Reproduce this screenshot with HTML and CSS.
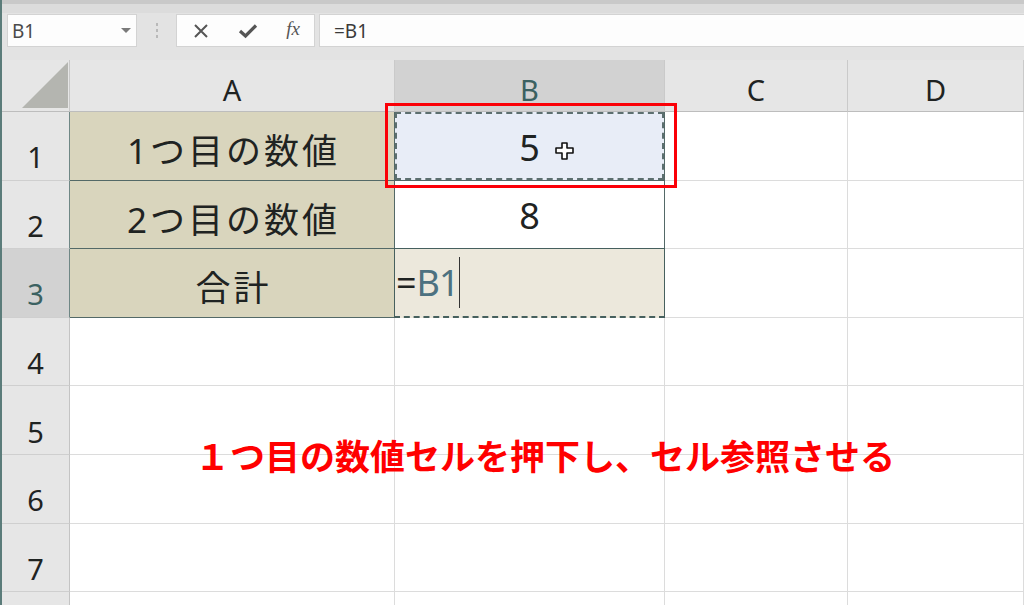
FILE: index.html
```html
<!DOCTYPE html>
<html lang="ja">
<head>
    <meta charset="UTF-8">
    <title>セル参照</title>
    <link rel="stylesheet" href="styles.css">
</head>
<body>
<div class="app">

    <!-- 数式バー -->
    <div class="topbar">
        <div class="namebox">
            <span>B1</span>
            <svg class="drop" width="10" height="5" viewBox="0 0 10 5"><path d="M0 0 H10 L5 5 Z" fill="#7a7a7a"/></svg>
        </div>
        <div class="dots"><i></i><i></i><i></i></div>
        <div class="fnbox">
            <svg width="16" height="16" viewBox="0 0 16 16"><path d="M2 2 L14 14 M14 2 L2 14" stroke="#555" stroke-width="2"/></svg>
            <svg width="20" height="16" viewBox="0 0 20 16"><path d="M2 8 L7.5 13 L18 2.5" stroke="#555" stroke-width="3.2" fill="none"/></svg>
            <span class="fx">fx</span>
        </div>
        <div class="formula">=B1</div>
    </div>

    <!-- シート -->
    <div class="sheet">
        <div class="corner"><svg width="46" height="46" viewBox="0 0 46 46"><path d="M46 0 V46 H0 Z" fill="#b4b5b0"/></svg></div>
        <div class="colhd">A</div>
        <div class="colhd sel">B</div>
        <div class="colhd">C</div>
        <div class="colhd">D</div>

        <div class="rowhd dk">1</div>
        <div class="cell label t">1つ目の数値</div>
        <div class="cell num copy">5
            <svg class="plus" width="22" height="20" viewBox="0 0 22 20"><path d="M8 2 H13 V7 H19 V12 H13 V18 H8 V12 H2 V7 H8 Z" fill="#fff" stroke="#111" stroke-width="1.6" stroke-linejoin="round"/></svg>
            <div class="redbox"></div>
        </div>
        <div class="cell"></div>
        <div class="cell"></div>

        <div class="rowhd dk">2</div>
        <div class="cell label t">2つ目の数値</div>
        <div class="cell num t">8</div>
        <div class="cell"></div>
        <div class="cell"></div>

        <div class="rowhd dk sel">3</div>
        <div class="cell label t">合計</div>
        <div class="cell edit"><span class="eq">=</span><span class="ref">B1</span><span class="caret"></span></div>
        <div class="cell"></div>
        <div class="cell"></div>

        <div class="rowhd">4</div>
        <div class="cell"></div><div class="cell"></div><div class="cell"></div><div class="cell"></div>
        <div class="rowhd">5</div>
        <div class="cell"></div><div class="cell"></div><div class="cell"></div><div class="cell"></div>
        <div class="rowhd">6</div>
        <div class="cell"></div><div class="cell"></div><div class="cell"></div><div class="cell"></div>
        <div class="rowhd">7</div>
        <div class="cell"></div><div class="cell"></div><div class="cell"></div><div class="cell"></div>
        <!-- 8行目は上端だけ見えている -->
        <div class="rowhd"></div>
        <div class="cell"></div><div class="cell"></div><div class="cell"></div><div class="cell"></div>

        <div class="note">１つ目の数値セルを押下し、セル参照させる</div>
    </div>

</div>
</body>
</html>
```

FILE: styles.css
```css
*
{
    box-sizing: border-box;
}

body
{
    margin: 0; height: 605px; overflow: hidden;
    font-family: "Noto Sans", "Noto Sans CJK JP", sans-serif;
    background-color: #ffffff; color: #1f2322;
}

.app { border-left: 2px solid #5b7c7a; height: 605px; overflow: hidden; }

/* 数式バー */
.topbar
{
    height: 60px; display: flex; align-items: flex-start;
    background-color: #e3e3e3; border-top: 4px solid #c9c9c9;
    padding-top: 10px; padding-left: 5px;
    box-shadow: inset 0 9px 0 #dcdcdc;
}

.namebox, .fnbox, .formula
{
    height: 33px; background-color: #fdfdfd;
    border: 1px solid #d3d3d3; display: flex; align-items: center;
}

.namebox
{
    width: 130px; padding: 0 5px 0 4px; justify-content: space-between;
    font-size: 19px; color: #4a4a4a;
}

.dots
{
    width: 39px; height: 33px; display: flex; flex-direction: column;
    align-items: center; justify-content: center; gap: 3px;
}
.dots i { width: 2px; height: 3px; background-color: #b9b9b9; display: block; }

.fnbox
{
    width: 139px; padding: 0 14px 0 16px; justify-content: space-between;
}

.fx
{
    font-family: "Liberation Serif", serif; font-style: italic;
    font-size: 19px; color: #555; padding-bottom: 3px;
}

.formula
{
    flex: 1; margin-left: 4px; padding-left: 14px;
    font-size: 19px; color: #3a3a3a; border-right: none;
}

/* シート */
.sheet
{
    position: relative; display: grid;
    grid-template-columns: 68px 325px 270px 183px 1fr;
    grid-template-rows: 52px;
    grid-auto-rows: 68.6px;
}

.corner
{
    background-color: #e6e6e6; border-right: 1px solid #c8c8c8;
    border-bottom: 1px solid #bdbdbd;
    display: flex; align-items: flex-end; justify-content: flex-end;
    padding: 0 1px 3px 0;
}

.colhd
{
    background-color: #e6e6e6; border-right: 1px solid #cacaca;
    border-bottom: 1px solid #bdbdbd;
    display: flex; justify-content: center; align-items: center;
    font-size: 29px; padding-top: 7px; color: #1f2322;
}

.rowhd
{
    background-color: #e6e6e6; border-right: 1px solid #c4c4c4;
    border-bottom: 1px solid #cfcfcf;
    display: flex; justify-content: center; align-items: center;
    font-size: 29px; padding-top: 22px;
}

.sel { background-color: #d2d2d2; color: #3b6161; }
.rowhd.dk { border-right-color: #6f8785; }

.cell
{
    border-right: 1px solid #dcdcdc; border-bottom: 1px solid #dcdcdc;
    display: flex; justify-content: center; align-items: center;
}

.t { border-right-color: #536967; border-bottom-color: #536967; }

.label
{
    background-color: #d9d5bd; font-size: 35px; letter-spacing: 3px;
    padding-left: 3px; padding-top: 6px;
}

.num { font-size: 36px; padding-top: 3px; }

.copy
{
    position: relative; background-color: #e8edf7;
    border-right-color: #536967; border-bottom-color: #536967;
}

.copy::after
{
    content: ""; position: absolute; inset: 0;
    border: 2px dashed #5c6f6f;
}

.plus { position: absolute; left: 159px; top: 29px; }

.redbox
{
    position: absolute; left: -10px; right: -13px; top: -9px; bottom: -8px;
    border: 3px solid #fb0007;
}

.edit
{
    background-color: #ece8dc; justify-content: flex-start;
    font-size: 36px; padding-left: 1px;
    border: 1px solid #46605e; border-bottom: 2px dashed #46605e;
    margin-top: -1px; margin-left: -1px;
}

.eq { color: #1f2322; }
.ref { color: #4d7180; letter-spacing: -1px; }
.caret { width: 1px; height: 51px; background-color: #333; margin-left: 0; }

.note
{
    position: absolute; left: 193px; top: 377px;
    font-family: "Noto Sans CJK JP", sans-serif; font-weight: bold;
    font-size: 35px; line-height: 35px; color: #ff0000; white-space: nowrap;
}
```
